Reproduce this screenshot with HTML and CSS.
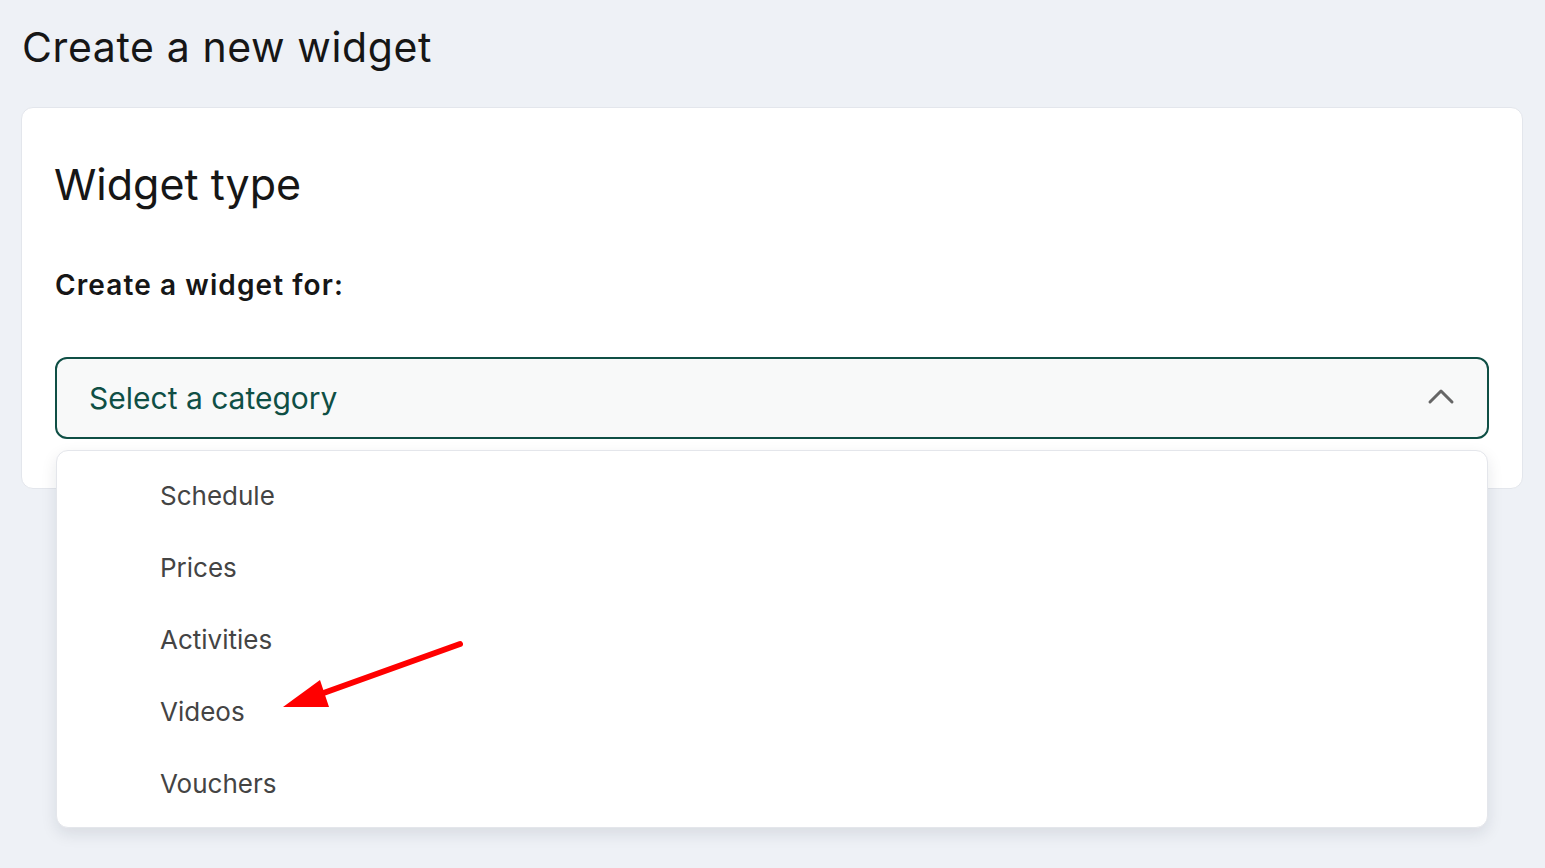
FILE: index.html
```html
<!DOCTYPE html>
<html lang="en">
<head>
<meta charset="utf-8">
<title>Create a new widget</title>
<link rel="stylesheet" href="styles.css">
</head>
<body>
<main class="page">
  <h1 class="page-title">Create a new widget</h1>
  <section class="card">
    <h2 class="card-title">Widget type</h2>
    <p class="field-label">Create a widget for:</p>
    <div class="select">
      <div class="select-box">
        <span class="select-value">Select a category</span>
        <svg class="chevron" width="28" height="18" viewBox="0 0 28 18" aria-hidden="true">
          <path d="M3 15 L14 4 L25 15" fill="none" stroke="#666" stroke-width="3" stroke-linecap="round" stroke-linejoin="round"/>
        </svg>
      </div>
      <ul class="menu">
        <li class="menu-item">Schedule</li>
        <li class="menu-item">Prices</li>
        <li class="menu-item">Activities</li>
        <li class="menu-item">Videos</li>
        <li class="menu-item">Vouchers</li>
      </ul>
    </div>
  </section>
</main>
<svg class="annotation" width="1545" height="868" viewBox="0 0 1545 868" aria-hidden="true">
  <line x1="460" y1="644" x2="318" y2="695" stroke="#ff0000" stroke-width="6" stroke-linecap="round"/>
  <polygon points="283,707 320,680 329,707" fill="#ff0000"/>
</svg>
</body>
</html>
```

FILE: styles.css
```css
* { box-sizing: border-box; }
html, body { margin: 0; padding: 0; }
body {
  background: #eef1f6;
  font-family: Inter, "Noto Sans", sans-serif;
  color: #161616;
  width: 1545px;
  height: 868px;
  overflow: hidden;
}
.page {
  padding: 23px 22px 0 21px;
}
.page-title {
  margin: 0 0 0 1px;
  font-size: 41px;
  line-height: 48px;
  font-weight: 400;
  letter-spacing: 0.6px;
}
.card {
  margin-top: 36px;
  background: #fff;
  border: 1px solid #e3e6ec;
  border-radius: 12px;
  padding: 48px 33px 49px 33px;
}
.card-title {
  margin: 0 0 0 -1px;
  font-size: 43px;
  line-height: 56px;
  font-weight: 400;
}
.field-label {
  margin: 55px 0 0 0;
  font-size: 28px;
  line-height: 36px;
  font-weight: 600;
  letter-spacing: 1.1px;
}
.select {
  position: relative;
  margin-top: 54px;
}
.select-box {
  height: 82px;
  border: 2px solid #0f4f45;
  border-radius: 12px;
  background: #f8f9f9;
  display: flex;
  align-items: center;
  justify-content: space-between;
  padding: 0 32px 0 32px;
}
.select-value {
  color: #0f4f45;
  font-size: 30px;
  line-height: 40px;
}
.chevron { display: block; margin-top: -4px; }
.menu {
  position: absolute;
  top: 93px;
  left: 1px;
  right: 1px;
  margin: 0;
  padding: 8px 0;
  list-style: none;
  background: #fff;
  border: 1px solid #e4e6eb;
  border-radius: 12px;
  box-shadow: 0 6px 16px rgba(20, 30, 50, 0.10);
  z-index: 2;
}
.menu-item {
  height: 72px;
  display: flex;
  align-items: center;
  padding-left: 103px;
  font-size: 26px;
  color: #444;
}
.annotation {
  position: absolute;
  left: 0;
  top: 0;
  pointer-events: none;
  z-index: 5;
}
```
